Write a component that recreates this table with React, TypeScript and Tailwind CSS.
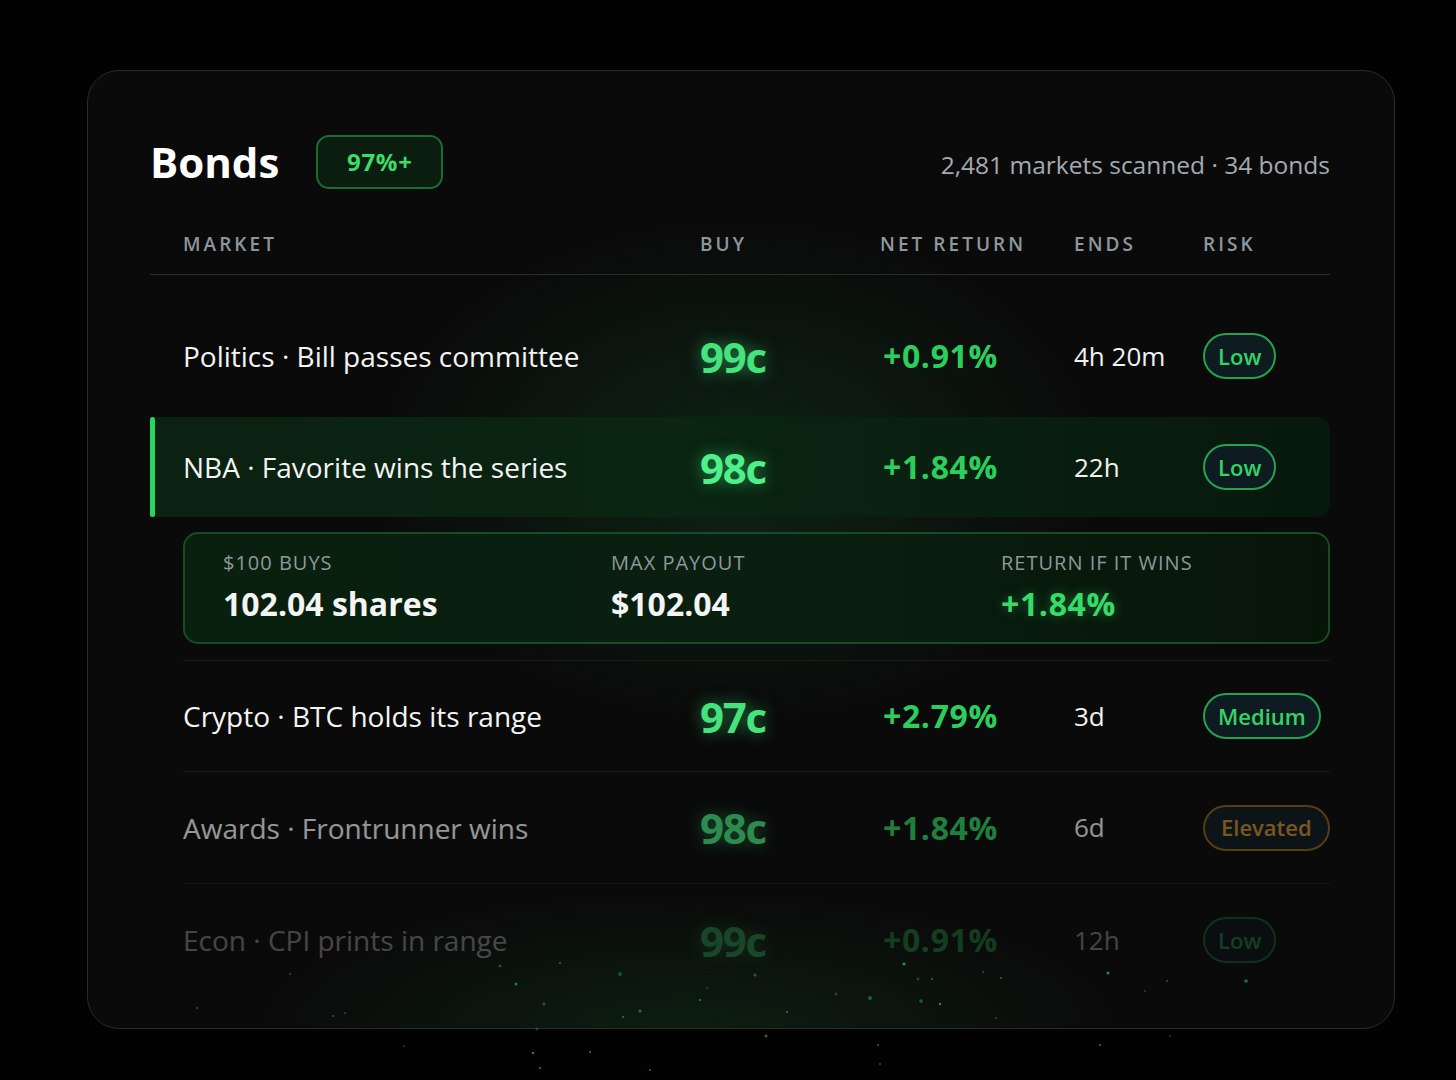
import React from 'react';

interface Bond {
  category: string;
  title: string;
  buy: string;
  net: string;
  ends: string;
  risk: 'Low' | 'Medium' | 'Elevated';
  fade?: string;
}

const BONDS: Bond[] = [
  { category: 'Politics', title: 'Bill passes committee', buy: '99c', net: '+0.91%', ends: '4h 20m', risk: 'Low' },
  { category: 'NBA', title: 'Favorite wins the series', buy: '98c', net: '+1.84%', ends: '22h', risk: 'Low' },
  { category: 'Crypto', title: 'BTC holds its range', buy: '97c', net: '+2.79%', ends: '3d', risk: 'Medium' },
  { category: 'Awards', title: 'Frontrunner wins', buy: '98c', net: '+1.84%', ends: '6d', risk: 'Elevated', fade: 'opacity-60' },
  { category: 'Econ', title: 'CPI prints in range', buy: '99c', net: '+0.91%', ends: '12h', risk: 'Low', fade: 'opacity-25' },
];

// little green specks drifting along the bottom edge
const DOTS: [number, number, number][] = [
  [197, 1008, 1.2], [290, 974, 1], [333, 1016, 1], [345, 1013, 0.8], [404, 1046, 1], [500, 966, 1.3],
  [516, 984, 1.5], [533, 1053, 1.2], [537, 1029, 1.6], [544, 1004, 1.5], [560, 963, 1], [590, 1052, 1],
  [620, 974, 2], [623, 1017, 1.2], [640, 1011, 1.5], [700, 1000, 1], [707, 988, 1], [755, 975, 1.5],
  [766, 1036, 1.5], [787, 1012, 1], [836, 994, 1.4], [870, 998, 2], [878, 1045, 1], [904, 964, 1.6],
  [918, 979, 1.5], [921, 1001, 1.8], [932, 979, 1], [940, 1004, 1.2], [983, 972, 1.2], [996, 1018, 1],
  [1001, 978, 1], [1108, 973, 1.5], [1145, 991, 1], [1167, 981, 1], [1246, 981, 1.8], [1100, 1045, 1],
  [1170, 1036, 1], [880, 1064, 1], [650, 1070, 1], [540, 1068, 1],
];

const GRID = 'grid grid-cols-[517px_180px_194px_129px_1fr] items-center pl-[33px]';

function RiskPill({ risk }: { risk: Bond['risk'] }) {
  const amber = risk === 'Elevated';
  return (
    <span
      className={`inline-flex h-[46px] items-center rounded-full border-2 bg-[#0e1c22] px-[13px] text-[22px] font-semibold ${
        amber ? 'border-[#8a5f1c] px-[16px] text-[#c48a2c]' : 'border-[#25a24f] text-[#34d366]'
      }`}
    >
      {risk}
    </span>
  );
}

function BondRow({ bond, active }: { bond: Bond; active?: boolean }) {
  return (
    <div className={`${GRID} h-full ${bond.fade ?? ''}`}>
      <div className="text-[28px] text-[#f3f4f4]">
        {bond.category} · {bond.title}
      </div>
      <div
        className={`text-[42px] font-bold tracking-[-0.03em] ${active ? 'text-[#4ef08a]' : 'text-[#45e27e]'}`}
        style={{ textShadow: '0 0 16px rgba(60,230,120,0.55)' }}
      >
        {bond.buy}
      </div>
      <div className="pl-[3px] text-[32px] font-bold tracking-[0.02em] text-[#2ccf5e]">{bond.net}</div>
      <div className="text-[26px] text-[#f1f1f1]">{bond.ends}</div>
      <div>
        <RiskPill risk={bond.risk} />
      </div>
    </div>
  );
}

export default function App() {
  const [politics, nba, crypto, awards, econ] = BONDS;

  return (
    <div
      className="relative min-h-[1080px] w-full overflow-hidden bg-[#020202] pl-[87px] pt-[70px]"
      style={{ fontFamily: '"Open Sans", "Noto Sans", sans-serif' }}
    >
      <div className="relative h-[959px] w-[1308px] overflow-hidden rounded-[32px] border border-[#2a2a2a] bg-[#0a0a0a]">
        {/* green haze behind the table */}
        <div className="pointer-events-none absolute inset-0 bg-[radial-gradient(ellipse_520px_360px_at_650px_400px,rgba(30,160,70,0.17),transparent_70%)]" />
        <div className="pointer-events-none absolute inset-0 bg-[radial-gradient(ellipse_620px_200px_at_600px_960px,rgba(30,150,60,0.14),transparent_70%)]" />

        <div className="relative pl-[62px] pr-[64px] pt-[63px]">
          {/* Header */}
          <div className="flex h-[56px] items-center">
            <h1 className="text-[42px] font-bold leading-none text-white">Bonds</h1>
            <span className="ml-[37px] flex h-[54px] w-[127px] items-center justify-center rounded-[13px] border-2 border-[#1d6a33] bg-[#0a1d0f] text-[24px] font-bold tracking-[0.03em] text-[#3bdc6b]">
              97%+
            </span>
            <span className="ml-auto pt-[6px] text-[24.5px] text-[#a4abb0]">2,481 markets scanned · 34 bonds</span>
          </div>

          {/* Column labels */}
          <div className={`${GRID} mt-[42px] border-b border-[#2c2c2c] pb-[18px] text-[19px] font-semibold leading-[24px] tracking-[0.16em] text-[#8d979e]`}>
            <div>MARKET</div>
            <div>BUY</div>
            <div>NET RETURN</div>
            <div>ENDS</div>
            <div>RISK</div>
          </div>

          {/* Rows */}
          <div className="mt-[31px] h-[100px]">
            <BondRow bond={politics} />
          </div>

          <div className="relative mt-[11px] h-[100px] rounded-r-[14px] bg-[linear-gradient(90deg,#0b2111_0%,#0a2512_45%,#07180c_100%)]">
            <div className="absolute bottom-0 left-0 top-0 w-[5px] rounded-full bg-[#2bd35f]" />
            <BondRow bond={nba} active />
          </div>

          {/* Expanded detail for the selected row */}
          <div className="ml-[33px] mt-[15px] grid h-[112px] grid-cols-[388px_390px_1fr] items-center rounded-[15px] border-2 border-[#174d25] bg-[linear-gradient(90deg,#09200f_0%,#0a1f0f_50%,#071509_100%)] pl-[38px]">
            <div>
              <div className="text-[20px] tracking-[0.05em] text-[#8e989b]">$100 BUYS</div>
              <div className="mt-[2px] text-[32px] font-bold text-[#f2f5f4]">102.04 shares</div>
            </div>
            <div>
              <div className="text-[20px] tracking-[0.05em] text-[#8e989b]">MAX PAYOUT</div>
              <div className="mt-[2px] text-[32px] font-bold text-[#f2f5f4]">$102.04</div>
            </div>
            <div>
              <div className="text-[20px] tracking-[0.05em] text-[#8e989b]">RETURN IF IT WINS</div>
              <div className="mt-[2px] text-[32px] font-bold tracking-[0.02em] text-[#37dc68]" style={{ textShadow: '0 0 12px rgba(60,230,120,0.35)' }}>
                +1.84%
              </div>
            </div>
          </div>

          <div className="ml-[33px] mt-[16px] border-t border-[#1b1b1b]">
            <div className="h-[111px] border-b border-[#1b1b1b] [&>div]:pl-0">
              <BondRow bond={crypto} />
            </div>
            <div className="h-[112px] border-b border-[#161616] [&>div]:pl-0">
              <BondRow bond={awards} />
            </div>
            <div className="h-[112px] [&>div]:pl-0">
              <BondRow bond={econ} />
            </div>
          </div>
        </div>
      </div>

      {/* specks */}
      <svg className="pointer-events-none absolute left-0 top-0 h-[1080px] w-[1456px]" viewBox="0 0 1456 1080">
        {DOTS.map(([x, y, r], i) => (
          <circle key={i} cx={x} cy={y} r={r} fill="#2fbf5d" opacity={0.35 + (i % 4) * 0.12} />
        ))}
      </svg>
    </div>
  );
}
